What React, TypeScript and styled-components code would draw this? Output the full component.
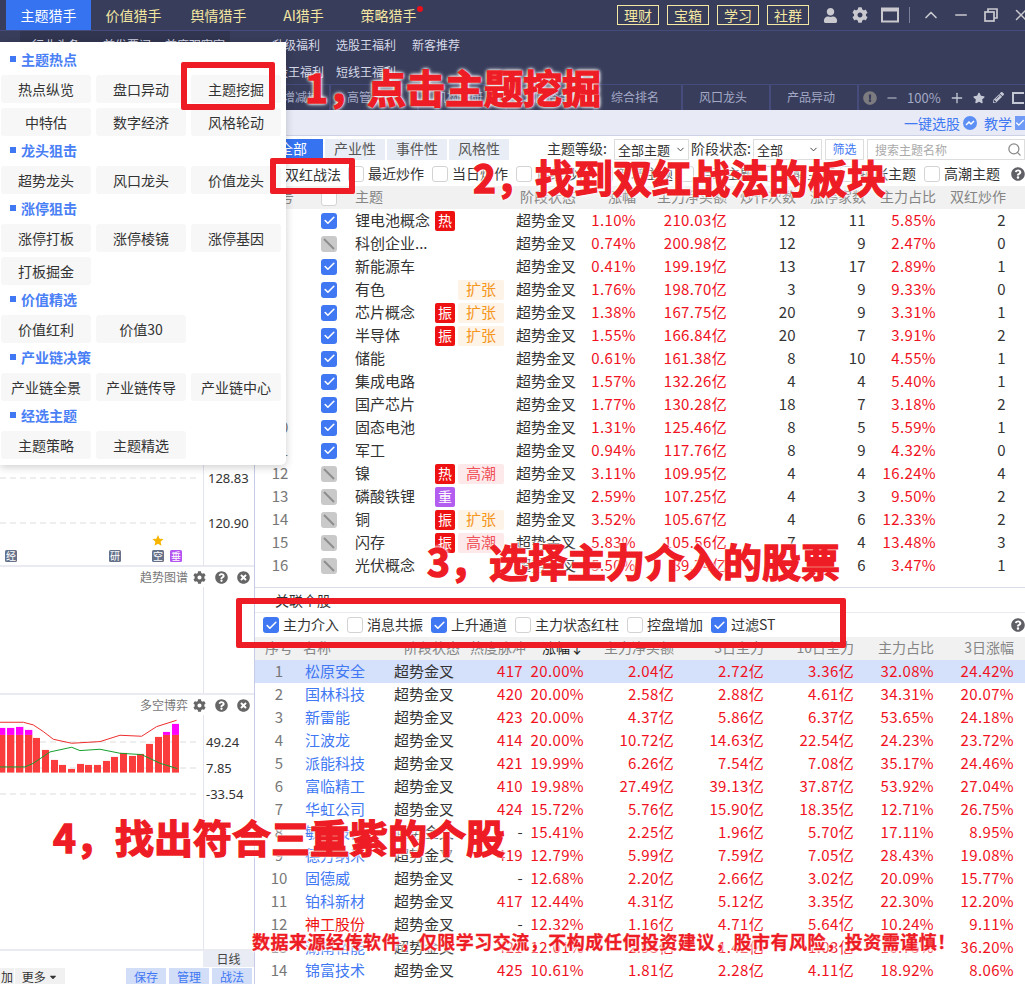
import React from 'react';
import styled, { createGlobalStyle } from 'styled-components';
import { FaUser, FaCog, FaStar, FaPencilAlt, FaQuestionCircle, FaTimesCircle, FaExclamationCircle, FaCaretDown } from 'react-icons/fa';
import { ChevronUp, ChevronDown, Minus, Plus, X, Search, Check } from 'lucide-react';

const RED = '#f0121e';
const BLUE = '#3f78f2';
const NAV = '#383d5b';
const GOLD = '#f3e7a2';

const GlobalStyle = createGlobalStyle`
  html, body { margin: 0; padding: 0; background: #fff; }
  body { font-family: "Noto Sans CJK SC", "Noto Sans", sans-serif; font-size: 14px; color: #333; }
  * { box-sizing: border-box; }
`;

const Page = styled.div`
  position: relative;
  width: 1025px;
  height: 984px;
  overflow: hidden;
  display: flex;
  flex-direction: column;
`;

/* top nav */
const TopBar = styled.div`
  height: 31px;
  flex: none;
  background: ${NAV};
  border-bottom: 1px solid #454c7c;
  display: flex;
  align-items: stretch;
  padding-left: 6px;
  overflow: hidden;
`;
const NavTab = styled.div<{ $active?: boolean }>`
  position: relative;
  width: 85px;
  flex: none;
  height: 30px;
  line-height: 30px;
  text-align: center;
  font-size: 14px;
  color: ${p => (p.$active ? '#fff' : GOLD)};
  background: ${p => (p.$active ? '#3573f1' : 'transparent')};
`;
const RedDot = styled.span`
  position: absolute;
  top: 6px;
  right: 8px;
  width: 6px;
  height: 6px;
  border-radius: 50%;
  background: #e8101c;
`;
const NavRight = styled.div`
  margin-left: 186px;
  display: flex;
  flex: none;
  align-items: center;
  height: 30px;
  color: #c9c9cf;
`;
const GoldButton = styled.div`
  width: 42px;
  height: 20px;
  margin-right: 8px;
  border: 1px solid ${GOLD};
  color: ${GOLD};
  font-size: 14px;
  line-height: 18px;
  text-align: center;
`;
const WinIcon = styled.span<{ $w: number }>`
  width: ${p => p.$w}px;
  flex: none;
  display: flex;
  justify-content: center;
  align-items: center;
`;
const VLine = styled.span`
  width: 1px;
  height: 16px;
  background: #7c8098;
  margin: 0 6px;
`;

const SubNav = styled.div`
  height: 53px;
  flex: none;
  background: ${NAV};
  display: flex;
  flex-direction: column;
`;
const SubRow = styled.div`
  height: 27px;
  display: flex;
  align-items: center;
  color: #d6d9e8;
  font-size: 12px;
  white-space: nowrap;
`;
const SubGroup = styled.div`
  width: 210px;
  height: 27px;
  flex: none;
  margin: 0 42px 0 20px;
  padding-left: 12px;
  background: #31354f;
  display: flex;
  align-items: center;
`;
const SubItem = styled.span<{ $w: number }>`
  width: ${p => p.$w}px;
  flex: none;
`;
const SubIndent = styled.span`
  width: 264px;
  flex: none;
`;

const RankBar = styled.div`
  height: 26px;
  flex: none;
  background: ${NAV};
  border-top: 1px solid #454c7c;
  display: flex;
  align-items: center;
  padding-left: 243px;
  overflow: hidden;
`;
const RankCell = styled.div`
  width: 88px;
  flex: none;
  height: 25px;
  padding-right: 6px;
  line-height: 24px;
  text-align: center;
  color: #a3a9c6;
  font-size: 12px;
  border-right: 2px solid #454c7c;
`;
const RankTools = styled.div`
  display: flex;
  flex: none;
  align-items: center;
  gap: 8px;
  padding-left: 4px;
  color: #c4c7d4;
  font-size: 13px;
  white-space: nowrap;
`;
const ZoomText = styled.span`
  color: #a3a9c6;
`;
const LayoutGlyph = styled.span`
  width: 12px;
  height: 12px;
  border: 2px solid #c4c7d4;
  border-right: none;
  flex: none;
`;

const Band = styled.div`
  height: 26px;
  flex: none;
  background: #e8ebf6;
  border-bottom: 1px solid #ccd1e6;
  display: flex;
  align-items: center;
  justify-content: flex-end;
  gap: 3px;
  color: ${BLUE};
  font-size: 14px;
  overflow: hidden;
`;
const BandMark = styled.svg`
  margin-right: 4px;
`;
const BandTick = styled.span`
  width: 10px;
  height: 14px;
  background: #6f9bf6;
  color: #fff;
  display: flex;
  align-items: center;
  justify-content: flex-start;
  flex: none;
`;

const Workspace = styled.div`
  flex: 1;
  min-height: 0;
  display: flex;
`;

/* left charts */
const LeftColumn = styled.div`
  width: 255px;
  flex: none;
  display: flex;
  flex-direction: column;
  border-right: 1px solid #c6cce6;
`;
const MainChart = styled.div`
  height: 431px;
  flex: none;
  border-bottom: 2px solid #e9eaf2;
`;
const Plot = styled.svg`
  display: block;
`;
const ChartPanel = styled.div<{ $h: number }>`
  height: ${p => p.$h}px;
  flex: none;
  border-bottom: 2px solid #e9eaf2;
  display: flex;
  flex-direction: column;
`;
const PanelHead = styled.div`
  height: 20px;
  flex: none;
  display: flex;
  align-items: center;
  justify-content: flex-end;
  gap: 9px;
  padding-right: 4px;
  color: #777;
  font-size: 12px;
`;
const PanelTitle = styled.span`
  margin-right: -4px;
  padding-bottom: 2px;
`;
const AxisBody = styled.div`
  flex: 1;
  width: 204px;
  border-right: 1px solid #e2e4f0;
`;
const DayRow = styled.div`
  height: 16px;
  flex: none;
  display: flex;
  justify-content: flex-end;
`;
const DayCell = styled.div`
  width: 51px;
  height: 16px;
  line-height: 15px;
  background: #e9ecf4;
  text-align: center;
  font-size: 12px;
  color: #444;
`;
const LeftTools = styled.div`
  flex: 1;
  display: flex;
  align-items: flex-start;
  padding-top: 1px;
  gap: 1px;
`;
const ToolBtn = styled.div<{ $w: number; $blue?: boolean }>`
  width: ${p => p.$w}px;
  height: 20px;
  line-height: 18px;
  text-align: center;
  font-size: 12px;
  flex: none;
  overflow: hidden;
  white-space: nowrap;
  margin-right: ${p => (p.$blue ? 2 : 0)}px;
  background: ${p => (p.$blue ? '#d2ddf8' : '#f1f1f1')};
  color: ${p => (p.$blue ? BLUE : '#333')};
`;
const ToolGap = styled.span`
  width: 59px;
  flex: none;
`;

/* right tables */
const RightColumn = styled.div`
  flex: 1;
  min-width: 0;
  display: flex;
  flex-direction: column;
`;
const FilterBar = styled.div`
  height: 28px;
  flex: none;
  display: flex;
  align-items: flex-start;
  padding-top: 3px;
  font-size: 14px;
  line-height: 19px;
`;
const TypeTab = styled.div<{ $active?: boolean; $w: number }>`
  width: ${p => p.$w}px;
  height: 21px;
  margin-right: 2px;
  padding-left: ${p => (p.$active ? 8 : 0)}px;
  text-align: center;
  background: ${p => (p.$active ? '#3573f1' : '#e9edf6')};
  color: ${p => (p.$active ? '#fff' : '#555')};
`;
const LevelLabel = styled.span<{ $w: number; $gap: number }>`
  width: ${p => p.$w}px;
  margin-left: ${p => p.$gap}px;
  flex: none;
  white-space: nowrap;
`;
const Select = styled.div<{ $w: number }>`
  width: ${p => p.$w}px;
  height: 21px;
  flex: none;
  border: 1px solid #ddd;
  padding: 0 2px 0 3px;
  display: flex;
  align-items: center;
  justify-content: space-between;
  font-size: 13px;
  white-space: nowrap;
  color: #333;
`;
const OutlineBtn = styled.div`
  width: 39px;
  height: 21px;
  margin-left: 3px;
  flex: none;
  text-align: center;
  border: 1px solid #ddd;
  font-size: 12px;
  line-height: 18px;
  color: ${BLUE};
`;
const SearchBox = styled.div`
  width: 158px;
  height: 21px;
  margin-left: 3px;
  flex: none;
  border: 1px solid #ddd;
  padding: 0 2px 0 7px;
  display: flex;
  align-items: center;
  justify-content: space-between;
  color: #aaa;
  font-size: 12px;
`;
const OptionBar = styled.div<{ $pad: number; $h: number; $lift?: number }>`
  height: ${p => p.$h}px;
  flex: none;
  display: flex;
  align-items: center;
  padding-left: ${p => p.$pad}px;
  padding-bottom: ${p => p.$lift ?? 0}px;
  font-size: 14px;
  color: #333;
`;
const OptionLabel = styled.span<{ $gap?: number }>`
  margin-left: 4px;
  margin-right: ${p => p.$gap ?? 8}px;
  padding-bottom: 2px;
  white-space: nowrap;
`;
const HelpSlot = styled.span`
  margin-left: auto;
  width: 14px;
  margin-right: 0;
  color: #5f5f66;
  display: flex;
`;
const WarTag = styled.span`
  width: 93px;
  flex: none;
  padding-left: 30px;
  padding-bottom: 1px;
  white-space: nowrap;
`;
const Box = styled.span<{ $kind: 'on' | 'off' | 'dis' }>`
  width: 16px;
  height: 16px;
  flex: none;
  border-radius: 3px;
  display: inline-flex;
  align-items: center;
  justify-content: center;
  color: #fff;
  border: ${p => (p.$kind === 'off' ? '1px solid #d3d3d3' : 'none')};
  background: ${p => (p.$kind === 'on' ? BLUE : p.$kind === 'dis' ? '#c9c9c9' : '#fff')};
`;

const UpperGrid = '50px 50px 80px 23px 58px 60px 60px 91px 69px 70px 70px 70px 19px';
const LowerGrid = '48px 91px 76px 53px 61px 90px 90px 90px 80px 80px 11px';

const HeadRow = styled.div<{ $cols: string }>`
  height: 23px;
  flex: none;
  display: grid;
  grid-template-columns: ${p => p.$cols};
  align-items: start;
  background: #f1f1f1;
  color: #858585;
  font-size: 14px;
  line-height: 21px;
`;
const DataRow = styled.div<{ $cols: string; $on?: boolean }>`
  height: 23px;
  flex: none;
  display: grid;
  grid-template-columns: ${p => p.$cols};
  align-items: start;
  line-height: 21px;
  font-size: 15px;
  background: ${p => (p.$on ? '#d5e0fb' : 'transparent')};
`;
const Cell = styled.span<{ $align?: string; $color?: string; $pad?: number }>`
  text-align: ${p => p.$align ?? 'left'};
  color: ${p => p.$color ?? '#333'};
  padding-left: ${p => p.$pad ?? 0}px;
  white-space: nowrap;
`;
const NumCell = styled(Cell)`
  text-align: right;
  letter-spacing: 0.35px;
`;
const HeadCell = styled.span<{ $align?: string; $dark?: boolean }>`
  text-align: ${p => p.$align ?? 'left'};
  white-space: nowrap;
  color: ${p => (p.$dark ? '#222' : 'inherit')};
`;
const BoxCell = styled.span`
  height: 23px;
  padding-left: 16px;
  display: flex;
  align-items: center;
`;
const BadgeCell = styled.span`
  height: 23px;
  display: flex;
  align-items: center;
`;
const Heat = styled.span<{ $bg: string }>`
  width: 20px;
  height: 20px;
  flex: none;
  border-radius: 2px;
  background: ${p => p.$bg};
  color: #fff;
  font-size: 14px;
  line-height: 18px;
  text-align: center;
`;
const Stage = styled.span<{ $tone: 'orange' | 'red' }>`
  width: 46px;
  height: 20px;
  flex: none;
  border-radius: 2px;
  font-size: 15px;
  line-height: 18px;
  text-align: center;
  background: ${p => (p.$tone === 'orange' ? '#fdf3e6' : '#fde9ea')};
  color: ${p => (p.$tone === 'orange' ? '#f5961e' : '#f0525a')};
`;
const Divider = styled.div<{ $after: number }>`
  height: 1px;
  flex: none;
  background: #d8dbe8;
  margin-top: ${p => p.$after}px;
`;
const LinkHead = styled.div`
  height: 25px;
  flex: none;
  display: flex;
  align-items: center;
  gap: 9px;
  padding-left: 7px;
  padding-bottom: 1px;
  border-bottom: 1px solid #e9e9ee;
  font-size: 14px;
`;
const Dot = styled.span`
  width: 4px;
  height: 4px;
  border-radius: 50%;
  background: ${BLUE};
`;

/* left drop menu */
const Menu = styled.div`
  position: absolute;
  left: 0;
  top: 42px;
  width: 286px;
  height: 423px;
  padding: 3px 0 0 1px;
  background: #fff;
  border-radius: 0 0 5px 0;
  box-shadow: 0 2px 8px rgba(0, 0, 0, 0.2);
`;
const MenuTitle = styled.div`
  height: 30px;
  padding: 0 0 2px 9px;
  display: flex;
  align-items: center;
  gap: 5px;
  color: #4a80f5;
  font-size: 14px;
  font-weight: 700;
`;
const MenuMark = styled.span`
  width: 6px;
  height: 6px;
  background: ${BLUE};
`;
const MenuGrid = styled.div`
  display: grid;
  grid-template-columns: repeat(3, 90px);
  gap: 5px;
`;
const MenuBtn = styled.div`
  height: 28px;
  line-height: 28px;
  text-align: center;
  border-radius: 3px;
  background: #f7f7f7;
  font-size: 14px;
  color: #333;
`;

/* annotations drawn over the screenshot */
const Frame = styled.div<{ $x: number; $y: number; $w: number; $h: number }>`
  position: absolute;
  left: ${p => p.$x}px;
  top: ${p => p.$y}px;
  width: ${p => p.$w}px;
  height: ${p => p.$h}px;
  border: 6px solid #ee1c25;
  border-radius: 2px;
`;
const Note = styled.div<{ $x: number; $y: number; $size: number; $track?: number }>`
  position: absolute;
  left: ${p => p.$x}px;
  top: ${p => p.$y}px;
  font-size: ${p => p.$size}px;
  letter-spacing: ${p => p.$track ?? 0}px;
  line-height: 1.02;
  font-weight: 700;
  white-space: nowrap;
  color: #ee1c25;
  -webkit-text-stroke: ${p => (p.$size > 30 ? 1.4 : 0.3)}px #ee1c25;
  text-shadow: 0 0 3px #fff, 0 0 3px #fff, 0 0 4px #fff, 0 0 5px rgba(255, 255, 255, 0.9);
`;

const CheckBox = ({ kind }: { kind: 'on' | 'off' | 'dis' }) => (
  <Box $kind={kind}>
    {kind === 'on' && <Check size={13} strokeWidth={3} />}
    {kind === 'dis' && (
      <svg width="16" height="16" viewBox="0 0 16 16">
        <line x1="3" y1="3" x2="13" y2="13" stroke="#8d8d8d" strokeWidth="2" />
      </svg>
    )}
  </Box>
);

const WindowIcon = () => (
  <svg width="18" height="16" viewBox="0 0 18 16">
    <rect x="1" y="1.5" width="16" height="13" fill="none" stroke="#c9c9cf" strokeWidth="2" />
    <rect x="1" y="1" width="16" height="3.5" fill="#c9c9cf" />
  </svg>
);

const RestoreIcon = () => (
  <svg width="14" height="14" viewBox="0 0 14 14" fill="none" stroke="#c9c9cf" strokeWidth="1.7">
    <rect x="1" y="4" width="9" height="9" />
    <path d="M4 4V1h9v9h-3" />
  </svg>
);

const menuGroups = [
  { title: '主题热点', items: ['热点纵览', '盘口异动', '主题挖掘', '中特估', '数字经济', '风格轮动'] },
  { title: '龙头狙击', items: ['超势龙头', '风口龙头', '价值龙头'] },
  { title: '涨停狙击', items: ['涨停打板', '涨停棱镜', '涨停基因', '打板掘金'] },
  { title: '价值精选', items: ['价值红利', '价值30'] },
  { title: '产业链决策', items: ['产业链全景', '产业链传导', '产业链中心'] },
  { title: '经选主题', items: ['主题策略', '主题精选'] },
];

// name, heat, stage, change, net, count, limit, share, double, box, index
const themes: string[][] = [
  ['锂电池概念', '热', '', '1.10%', '210.03亿', '12', '11', '5.85%', '2', 'on', '1'],
  ['科创企业...', '', '', '0.74%', '200.98亿', '12', '9', '2.47%', '0', 'dis', '2'],
  ['新能源车', '', '', '0.41%', '199.19亿', '13', '17', '2.89%', '1', 'on', '3'],
  ['有色', '', '扩张', '1.76%', '198.70亿', '3', '9', '9.33%', '0', 'on', '4'],
  ['芯片概念', '振', '扩张', '1.38%', '167.75亿', '20', '9', '3.31%', '1', 'on', '5'],
  ['半导体', '振', '扩张', '1.55%', '166.84亿', '20', '7', '3.91%', '2', 'on', '6'],
  ['储能', '', '', '0.61%', '161.38亿', '8', '10', '4.55%', '1', 'on', '7'],
  ['集成电路', '', '', '1.57%', '132.26亿', '4', '4', '5.40%', '1', 'on', '8'],
  ['国产芯片', '', '', '1.77%', '130.28亿', '18', '7', '3.18%', '2', 'on', '9'],
  ['固态电池', '', '', '1.31%', '125.46亿', '8', '5', '5.59%', '1', 'on', '10'],
  ['军工', '', '', '0.94%', '117.76亿', '8', '9', '4.32%', '0', 'on', '11'],
  ['镍', '热', '高潮', '3.11%', '109.95亿', '4', '4', '16.24%', '4', 'dis', '12'],
  ['磷酸铁锂', '重', '', '2.59%', '107.25亿', '4', '3', '9.50%', '2', 'dis', '13'],
  ['铜', '振', '扩张', '3.52%', '105.67亿', '4', '6', '12.33%', '2', 'dis', '14'],
  ['闪存', '振', '高潮', '5.83%', '105.56亿', '7', '4', '13.48%', '3', 'dis', '15'],
  ['光伏概念', '', '', '5.50%', '89.74亿', '6', '6', '3.47%', '1', 'dis', '16'],
];

const stocks = [
  ['松原安全', '417', '20.00%', '2.04亿', '2.72亿', '3.36亿', '32.08%', '24.42%'],
  ['国林科技', '420', '20.00%', '2.58亿', '2.88亿', '4.61亿', '34.31%', '20.07%'],
  ['新雷能', '423', '20.00%', '4.37亿', '5.86亿', '6.37亿', '53.65%', '24.18%'],
  ['江波龙', '414', '20.00%', '10.72亿', '14.63亿', '22.54亿', '24.23%', '23.72%'],
  ['派能科技', '421', '19.99%', '6.26亿', '7.54亿', '7.08亿', '35.17%', '24.46%'],
  ['富临精工', '410', '19.98%', '27.49亿', '39.13亿', '37.87亿', '53.92%', '27.04%'],
  ['华虹公司', '424', '15.72%', '5.76亿', '15.90亿', '18.35亿', '12.71%', '26.75%'],
  ['敏芯股份', '-', '15.41%', '2.25亿', '1.96亿', '5.70亿', '17.11%', '8.95%'],
  ['德方纳米', '419', '12.79%', '5.99亿', '7.59亿', '7.05亿', '28.43%', '19.08%'],
  ['固德威', '-', '12.68%', '2.20亿', '2.66亿', '3.02亿', '20.09%', '15.77%'],
  ['铂科新材', '417', '12.44%', '4.31亿', '5.12亿', '3.35亿', '22.30%', '12.20%'],
  ['神工股份', '-', '12.32%', '1.16亿', '4.71亿', '5.64亿', '10.24%', '9.11%'],
  ['湖南裕能', '421', '12.01%', '2.93亿', '1.42亿', '1.03亿', '16.75%', '36.20%'],
  ['锦富技术', '425', '10.61%', '1.81亿', '2.28亿', '4.11亿', '18.92%', '8.06%'],
];

const heatColor: Record<string, string> = { 热: '#ee1111', 振: '#ee1111', 重: '#b25cf0' };

// 3x coordinates: x, width, red top, magenta top
const bars: number[][] = [
  [-6, 22, 825, 804], [21, 22, 825, 804], [48, 22, 825, 801], [75, 22, 825, 810], [99, 21, 834, 0], [126, 21, 870, 0],
  [153, 21, 900, 0], [177, 21, 915, 0], [204, 21, 927, 0], [231, 21, 912, 0], [255, 21, 915, 0], [282, 21, 915, 0],
  [309, 21, 903, 0], [333, 21, 891, 0], [360, 21, 879, 0], [387, 21, 888, 0], [411, 21, 882, 0], [438, 21, 852, 0],
  [465, 21, 831, 0], [489, 21, 825, 816], [516, 21, 825, 792],
];

const chips: [number, string, string][] = [[5, '经', '#66728a'], [109, '研', '#66728a'], [152, '空', '#66728a'], [170, '垂', '#b455f2']];

const PanelIcons = () => (
  <>
    <FaCog size={13} color="#666" />
    <FaQuestionCircle size={13} color="#666" />
    <FaTimesCircle size={13} color="#666" />
  </>
);

const App = () => (
  <Page>
    <GlobalStyle />
    <TopBar>
      <NavTab $active>主题猎手</NavTab>
      <NavTab>价值猎手</NavTab>
      <NavTab>舆情猎手</NavTab>
      <NavTab>AI猎手</NavTab>
      <NavTab>
        策略猎手
        <RedDot />
      </NavTab>
      <NavRight>
        <GoldButton>理财</GoldButton>
        <GoldButton>宝箱</GoldButton>
        <GoldButton>学习</GoldButton>
        <GoldButton>社群</GoldButton>
        <WinIcon $w={26}><FaUser size={15} /></WinIcon>
        <WinIcon $w={34}><FaCog size={16} /></WinIcon>
        <WinIcon $w={26}><WindowIcon /></WinIcon>
        <VLine />
        <WinIcon $w={30}><ChevronUp size={20} /></WinIcon>
        <WinIcon $w={30}><Minus size={18} /></WinIcon>
        <WinIcon $w={30}><RestoreIcon /></WinIcon>
        <WinIcon $w={30}><X size={18} /></WinIcon>
      </NavRight>
    </TopBar>
    <SubNav>
      <SubRow>
        <SubGroup>
          <SubItem $w={71}>行业头条</SubItem>
          <SubItem $w={62}>首发要闻</SubItem>
          <SubItem $w={65}>首席观察室</SubItem>
        </SubGroup>
        <SubItem $w={64}>升级福利</SubItem>
        <SubItem $w={76}>选股王福利</SubItem>
        <SubItem $w={64}>新客推荐</SubItem>
      </SubRow>
      <SubRow>
        <SubIndent />
        <SubItem $w={72}>波段王福利</SubItem>
        <SubItem $w={64}>短线王福利</SubItem>
      </SubRow>
    </SubNav>
    <RankBar>
      <RankCell>大股东增减持</RankCell>
      <RankCell>高管增持</RankCell>
      <RankCell>机构调研</RankCell>
      <RankCell>北向资金</RankCell>
      <RankCell>综合排名</RankCell>
      <RankCell>风口龙头</RankCell>
      <RankCell>产品异动</RankCell>
      <RankTools>
        <FaExclamationCircle size={14} color="#7c7c80" />
        <Minus size={14} />
        <ZoomText>100%</ZoomText>
        <Plus size={16} />
        <FaStar size={12} />
        <FaPencilAlt size={11} />
        <LayoutGlyph />
      </RankTools>
    </RankBar>
    <Band>
      一键选股
      <BandMark width="14" height="14" viewBox="0 0 14 14">
        <circle cx="7" cy="7" r="7" fill="#5b8ff5" />
        <path d="M3 9l3-3 2 2 3-3" fill="none" stroke="#fff" strokeWidth="1.5" />
      </BandMark>
      教学
      <BandTick><Check size={10} strokeWidth={3} /></BandTick>
    </Band>
    <Workspace>
      <LeftColumn>
        <MainChart>
          <Plot width="254" height="430" viewBox="0 0 254 430">
            <line x1="0" y1="342" x2="198" y2="342" stroke="#ddd" strokeDasharray="6 4" />
            <line x1="0" y1="387" x2="198" y2="387" stroke="#ddd" strokeDasharray="6 4" />
            <line x1="203.5" y1="0" x2="203.5" y2="430" stroke="#e2e4f0" />
            <text x="208" y="347" fontSize="13" fill="#333" fontFamily="Noto Sans">128.83</text>
            <text x="208" y="392" fontSize="13" fill="#333" fontFamily="Noto Sans">120.90</text>
            <path d="M158 399l1.6 3.8 4 .3-3 2.7.9 4-3.5-2.1-3.5 2.1.9-4-3-2.7 4-.3z" fill="#f7b500" />
            {chips.map(([x, label, color]) => (
              <g key={label}>
                <rect x={x} y="414" width="12" height="12" rx="1.5" fill={color} />
                <text x={x + 6} y="424" fontSize="10" fill="#fff" textAnchor="middle">{label}</text>
              </g>
            ))}
          </Plot>
        </MainChart>
        <ChartPanel $h={128}>
          <PanelHead>
            <PanelTitle>趋势图谱</PanelTitle>
            <PanelIcons />
          </PanelHead>
          <AxisBody />
        </ChartPanel>
        <ChartPanel $h={256}>
          <PanelHead>
            <PanelTitle>多空博弈</PanelTitle>
            <PanelIcons />
          </PanelHead>
          <Plot width="254" height="234" viewBox="0 0 254 234">
            <line x1="203.5" y1="0" x2="203.5" y2="234" stroke="#e2e4f0" />
            {[27, 53, 79].map(y => (
              <line key={y} x1="0" y1={y} x2="198" y2={y} stroke="#ddd" strokeDasharray="6 4" />
            ))}
            <g transform="translate(0 -715)">
              <g transform="scale(0.3333) translate(0 1380)">
                {bars.map(([x, w, top, mag]) => (
                  <g key={x}>
                    {mag > 0 && <rect x={x} y={mag} width={w} height={top - mag} fill="#ff00ff" />}
                    <rect x={x} y={top} width={w} height={938 - top} fill="#fa3c3c" />
                  </g>
                ))}
                <polyline
                  fill="none"
                  stroke="#ee2b2b"
                  strokeWidth="3"
                  points="0,787 70,787 100,795 130,815 160,838 215,850 300,845 360,826 425,829 470,800 530,781"
                />
                <polyline
                  fill="none"
                  stroke="#14a02c"
                  strokeWidth="3"
                  points="0,921 75,921 100,910 150,876 215,862 240,872 300,868 360,880 425,884 480,910 532,926"
                />
              </g>
            </g>
            <text x="206" y="32" fontSize="13" fill="#333" fontFamily="Noto Sans">49.24</text>
            <text x="206" y="58" fontSize="13" fill="#333" fontFamily="Noto Sans">7.85</text>
            <text x="206" y="84" fontSize="13" fill="#333" fontFamily="Noto Sans">-33.54</text>
          </Plot>
        </ChartPanel>
        <DayRow>
          <DayCell>日线</DayCell>
        </DayRow>
        <LeftTools>
          <ToolBtn $w={14}>加</ToolBtn>
          <ToolBtn $w={50}>
            更多 <FaCaretDown size={10} />
          </ToolBtn>
          <ToolGap />
          <ToolBtn $w={40} $blue>保存</ToolBtn>
          <ToolBtn $w={40} $blue>管理</ToolBtn>
          <ToolBtn $w={40} $blue>战法</ToolBtn>
        </LeftTools>
      </LeftColumn>
      <RightColumn>
        <FilterBar>
          <TypeTab $active $w={68}>全部</TypeTab>
          <TypeTab $w={60}>产业性</TypeTab>
          <TypeTab $w={60}>事件性</TypeTab>
          <TypeTab $w={60}>风格性</TypeTab>
          <LevelLabel $gap={36} $w={67}>主题等级:</LevelLabel>
          <Select $w={75}>
            全部主题
            <ChevronDown size={11} />
          </Select>
          <LevelLabel $gap={2} $w={62}>阶段状态:</LevelLabel>
          <Select $w={69}>
            全部
            <ChevronDown size={11} />
          </Select>
          <OutlineBtn>筛选</OutlineBtn>
          <SearchBox>
            搜索主题名称
            <Search size={15} color="#888" />
          </SearchBox>
        </FilterBar>
        <OptionBar $pad={0} $h={22} $lift={2}>
          <WarTag>双红战法</WarTag>
          <CheckBox kind="off" />
          <OptionLabel>最近炒作</OptionLabel>
          <CheckBox kind="off" />
          <OptionLabel>当日炒作</OptionLabel>
          <CheckBox kind="off" />
          <OptionLabel $gap={5}>连续炒作</OptionLabel>
          <CheckBox kind="off" />
          <OptionLabel $gap={5}>新增主题</OptionLabel>
          <CheckBox kind="off" />
          <OptionLabel $gap={5}>启动主题</OptionLabel>
          <CheckBox kind="off" />
          <OptionLabel $gap={5}>发酵主题</OptionLabel>
          <CheckBox kind="off" />
          <OptionLabel>扩张主题</OptionLabel>
          <CheckBox kind="off" />
          <OptionLabel>高潮主题</OptionLabel>
          <HelpSlot><FaQuestionCircle size={14} /></HelpSlot>
        </OptionBar>
        <HeadRow $cols={UpperGrid}>
          <HeadCell $align="center">序号</HeadCell>
          <BoxCell><CheckBox kind="off" /></BoxCell>
          <HeadCell>主题</HeadCell>
          <span />
          <span />
          <HeadCell $align="right">阶段状态</HeadCell>
          <HeadCell $align="right">涨幅</HeadCell>
          <HeadCell $align="right">主力净买额</HeadCell>
          <HeadCell $align="right">炒作次数</HeadCell>
          <HeadCell $align="right">涨停家数</HeadCell>
          <HeadCell $align="right">主力占比</HeadCell>
          <HeadCell $align="right">双红炒作</HeadCell>
        </HeadRow>
        {themes.map(t => (
          <DataRow key={t[10]} $cols={UpperGrid}>
            <Cell $align="center" $color="#777">{t[10]}</Cell>
            <BoxCell><CheckBox kind={t[9] as 'on' | 'dis'} /></BoxCell>
            <Cell>{t[0]}</Cell>
            <BadgeCell>{t[1] && <Heat $bg={heatColor[t[1]]}>{t[1]}</Heat>}</BadgeCell>
            <BadgeCell>{t[2] && <Stage $tone={t[2] === '扩张' ? 'orange' : 'red'}>{t[2]}</Stage>}</BadgeCell>
            <Cell>超势金叉</Cell>
            <NumCell $color={RED}>{t[3]}</NumCell>
            <NumCell $color={RED}>{t[4]}</NumCell>
            <NumCell>{t[5]}</NumCell>
            <NumCell>{t[6]}</NumCell>
            <NumCell $color={RED}>{t[7]}</NumCell>
            <NumCell>{t[8]}</NumCell>
          </DataRow>
        ))}
        <Divider $after={10} />
        <LinkHead>
          <Dot />
          关联个股
        </LinkHead>
        <OptionBar $pad={8} $h={24}>
          <CheckBox kind="on" />
          <OptionLabel>主力介入</OptionLabel>
          <CheckBox kind="off" />
          <OptionLabel>消息共振</OptionLabel>
          <CheckBox kind="on" />
          <OptionLabel>上升通道</OptionLabel>
          <CheckBox kind="off" />
          <OptionLabel>主力状态红柱</OptionLabel>
          <CheckBox kind="off" />
          <OptionLabel>控盘增加</OptionLabel>
          <CheckBox kind="on" />
          <OptionLabel>过滤ST</OptionLabel>
          <HelpSlot><FaQuestionCircle size={14} /></HelpSlot>
        </OptionBar>
        <HeadRow $cols={LowerGrid}>
          <HeadCell $align="center">序号</HeadCell>
          <HeadCell>名称</HeadCell>
          <HeadCell $align="center">阶段状态</HeadCell>
          <HeadCell $align="right">热度脉冲</HeadCell>
          <HeadCell $align="right" $dark>涨幅↓</HeadCell>
          <HeadCell $align="right">主力净买额</HeadCell>
          <HeadCell $align="right">3日主力</HeadCell>
          <HeadCell $align="right">10日主力</HeadCell>
          <HeadCell $align="right">主力占比</HeadCell>
          <HeadCell $align="right">3日涨幅</HeadCell>
        </HeadRow>
        {stocks.map((s, i) => (
          <DataRow key={s[0]} $cols={LowerGrid} $on={i === 0}>
            <Cell $align="center" $color="#777">{i + 1}</Cell>
            <Cell $color={s[0] === '神工股份' ? '#f01010' : BLUE} $pad={2}>{s[0]}</Cell>
            <Cell>超势金叉</Cell>
            <NumCell $color={s[1] === '-' ? '#333' : RED}>{s[1]}</NumCell>
            {s.slice(2).map((v, k) => (
              <NumCell key={k} $color={RED}>{v}</NumCell>
            ))}
          </DataRow>
        ))}
      </RightColumn>
    </Workspace>

    <Menu>
      {menuGroups.map(g => (
        <React.Fragment key={g.title}>
          <MenuTitle>
            <MenuMark />
            {g.title}
          </MenuTitle>
          <MenuGrid>
            {g.items.map(item => (
              <MenuBtn key={item}>{item}</MenuBtn>
            ))}
          </MenuGrid>
        </React.Fragment>
      ))}
    </Menu>

    <Frame $x={181} $y={62} $w={94} $h={48} />
    <Frame $x={270} $y={158} $w={85} $h={36} />
    <Frame $x={236} $y={598} $w={610} $h={50} />
    <Note $x={305} $y={67} $size={39}>1，点击主题挖掘</Note>
    <Note $x={473} $y={157} $size={39}>2，找到双红战法的板块</Note>
    <Note $x={427} $y={541} $size={39}>3，选择主力介入的股票</Note>
    <Note $x={53} $y={817} $size={39}>4，找出符合三重紫的个股</Note>
    <Note $x={252} $y={932} $size={18} $track={0.52}>数据来源经传软件，仅限学习交流，不构成任何投资建议，股市有风险，投资需谨慎！</Note>
  </Page>
);

export default App;
